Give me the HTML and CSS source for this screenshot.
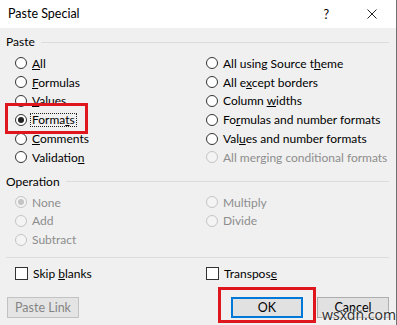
FILE: index.html
```html
<!DOCTYPE html>
<html lang="en">
  <head>
    <meta charset="UTF-8" />
    <meta name="viewport" content="width=device-width, initial-scale=1.0" />
    <title>Paste Special</title>
    <link rel="stylesheet" href="styles.css">
  </head>
  <body>
    <div class="dialog">
      <div class="titlebar">
        <span class="title">Paste Special</span>
        <span class="help">?</span>
        <svg class="close" width="10" height="10" viewBox="0 0 10 10">
          <path d="M0.5 0.5 L9.5 9.5 M9.5 0.5 L0.5 9.5" stroke="#222" stroke-width="1" fill="none" />
        </svg>
      </div>

      <div class="content">
        <div class="group-label"><span>Paste</span></div>
        <div class="options paste-options">
          <label class="option"><span class="radio"></span><span><u>A</u>ll</span></label>
          <label class="option"><span class="radio"></span><span><u>F</u>ormulas</span></label>
          <label class="option"><span class="radio"></span><span><u>V</u>alues</span></label>
          <label class="option"><span class="radio checked"></span><span class="focus">Forma<u>t</u>s</span></label>
          <label class="option"><span class="radio"></span><span><u>C</u>omments</span></label>
          <label class="option"><span class="radio"></span><span>Validatio<u>n</u></span></label>
          <label class="option"><span class="radio"></span><span>All using Source t<u>h</u>eme</span></label>
          <label class="option"><span class="radio"></span><span>All e<u>x</u>cept borders</span></label>
          <label class="option"><span class="radio"></span><span>Column <u>w</u>idths</span></label>
          <label class="option"><span class="radio"></span><span>Fo<u>r</u>mulas and number formats</span></label>
          <label class="option"><span class="radio"></span><span>Val<u>u</u>es and number formats</span></label>
          <label class="option disabled"><span class="radio"></span><span>All merging conditional formats</span></label>
        </div>

        <div class="group-label"><span>Operation</span></div>
        <div class="options op-options">
          <label class="option disabled"><span class="radio checked"></span><span>None</span></label>
          <label class="option disabled"><span class="radio"></span><span>Add</span></label>
          <label class="option disabled"><span class="radio"></span><span>Subtract</span></label>
          <label class="option disabled"><span class="radio"></span><span>Multiply</span></label>
          <label class="option disabled"><span class="radio"></span><span>Divide</span></label>
        </div>

        <div class="separator"></div>

        <div class="checks">
          <label class="option"><span class="checkbox"></span><span>Skip <u>b</u>lanks</span></label>
          <label class="option"><span class="checkbox"></span><span>Transpos<u>e</u></span></label>
        </div>

        <div class="buttons">
          <button class="btn" disabled>Paste Link</button>
          <div class="spacer"></div>
          <button class="btn default">OK</button>
          <button class="btn">Cancel</button>
        </div>
      </div>

      <div class="highlight highlight-formats"></div>
      <div class="highlight highlight-ok"></div>
      <div class="watermark">wsxdn.com</div>
    </div>
  </body>
</html>
```

FILE: styles.css
```css
/* General */
body {
  margin: 0;
  font-family: Lato, "Noto Sans", sans-serif;
  font-size: 12px;
  color: #000;
}

.dialog {
  position: relative;
  width: 397px;
  height: 325px;
  background: #f0f0f0;
  box-sizing: border-box;
  border-right: 1px solid #707070;
  overflow: hidden;
}

/* Title bar */
.titlebar {
  height: 28px;
  background: white;
  display: flex;
  align-items: center;
  padding-left: 8px;
  font-size: 12.5px;
}

.title {
  flex: 1;
  line-height: 16px;
}

.help {
  margin-right: 38px;
}

.close {
  margin-right: 19px;
}

/* Content */
.content {
  padding: 6px 6px 0 6px;
}

.group-label {
  display: flex;
  align-items: center;
  line-height: 16px;
}

.group-label::after {
  content: "";
  flex: 1;
  height: 1px;
  background: #dcdcdc;
  margin: 0 1px 0 6px;
}

.options {
  display: grid;
  grid-auto-flow: column;
  grid-template-columns: 191px 1fr;
  padding-left: 9px;
}

.paste-options {
  grid-template-rows: repeat(6, 18.8px);
  margin: 4px 0 7px;
}

.op-options {
  grid-template-rows: repeat(3, 18.8px);
  margin-top: 3px;
}

.option {
  display: flex;
  align-items: center;
  gap: 5px;
  white-space: nowrap;
}

.option.disabled {
  color: #8d8d8d;
}

.radio {
  width: 12px;
  height: 12px;
  box-sizing: border-box;
  border: 1px solid #333;
  border-radius: 50%;
  background: white;
  display: flex;
  align-items: center;
  justify-content: center;
}

.radio.checked::after {
  content: "";
  width: 6px;
  height: 6px;
  border-radius: 50%;
  background: #222;
}

.disabled .radio {
  border-color: #c4c4c4;
  background: #f4f4f4;
}

.disabled .radio.checked::after {
  background: #c4c4c4;
}

.focus {
  outline: 1px dotted #222;
  outline-offset: 0;
  padding: 0 1px;
  margin-left: -1px;
  line-height: 12px;
}

.separator {
  height: 1px;
  background: #dcdcdc;
  margin: 8px 1px 0 0;
}

/* Checkboxes */
.checks {
  display: grid;
  grid-template-columns: 191px 1fr;
  padding-left: 9px;
  height: 19px;
  margin-top: 6px;
}

.checkbox {
  width: 13px;
  height: 13px;
  box-sizing: border-box;
  border: 1px solid #333;
  background: white;
}

/* Buttons */
.buttons {
  display: flex;
  margin-top: 14px;
  padding-left: 1px;
}

.spacer {
  flex: 1;
}

.btn {
  width: 72px;
  height: 21px;
  font-family: inherit;
  font-size: 12.5px;
  background: #e1e1e1;
  border: 1px solid #adadad;
  color: #000;
  padding: 0;
  margin-right: 14px;
}

.btn:last-child {
  margin-right: 1px;
}

.btn:disabled {
  background: #e4e4e4;
  border-color: #c2c2c2;
  color: #848484;
}

.btn.default {
  border: 2px solid #0078d7;
}

/* Overlays */
.highlight {
  position: absolute;
  border: 3px solid #e0161e;
  box-sizing: border-box;
}

.highlight-formats {
  left: 5px;
  top: 103px;
  width: 83px;
  height: 31px;
}

.highlight-ok {
  left: 218px;
  top: 287px;
  width: 98px;
  height: 36px;
}

.watermark {
  position: absolute;
  left: 322px;
  top: 305px;
  font-family: "Noto Sans", sans-serif;
  font-size: 14px;
  color: #333;
  text-shadow: 0 0 2px white, 0 0 2px white;
}
```
